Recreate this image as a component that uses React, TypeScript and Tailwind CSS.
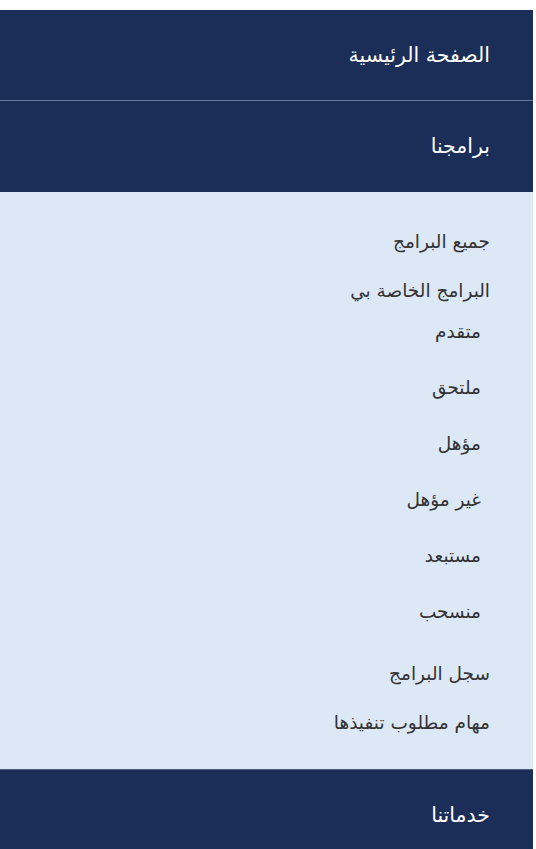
const subItems = ['متقدم', 'ملتحق', 'مؤهل', 'غير مؤهل', 'مستبعد', 'منسحب'];

export default function App() {
  return (
    <div className="min-h-screen bg-white pt-[10px]">
      <nav
        dir="rtl"
        className="w-[533px]"
        style={{ fontFamily: '"DejaVu Sans", sans-serif' }}
      >
        {/* Main link */}
        <div className="h-[91px] bg-[#1b2e57] flex items-center pr-[43px] text-white text-[20.5px] border-b border-[#6e7a94]">
          الصفحة الرئيسية
        </div>

        {/* Programs */}
        <div className="h-[91px] bg-[#1b2e57] flex items-center pr-[43px] text-white text-[20.5px]">
          برامجنا
        </div>
        <div className="bg-[#dde8f7] text-[#333333] text-[18.5px] pt-[38px] pb-[34px] border-b border-[#4b5b7d]">
          <div className="pr-[43px] h-[24px] leading-[24px]">جميع البرامج</div>
          <div className="pr-[43px] h-[24px] leading-[24px] mt-[25px]">البرامج الخاصة بي</div>
          <div className="flex flex-col">
            {subItems.map((s, i) => (
              <div
                key={s}
                className={`pr-[52px] h-[24px] leading-[24px] ${i === 0 ? 'mt-[17px]' : 'mt-[32px]'}`}
              >
                {s}
              </div>
            ))}
          </div>
          <div className="pr-[43px] h-[24px] leading-[24px] mt-[38px]">سجل البرامج</div>
          <div className="pr-[43px] h-[24px] leading-[24px] mt-[25px]">مهام مطلوب تنفيذها</div>
        </div>

        {/* Services */}
        <div className="h-[90px] bg-[#1b2e57] flex items-center pr-[43px] text-white text-[20.5px]">
          خدماتنا
        </div>
      </nav>
    </div>
  );
}
